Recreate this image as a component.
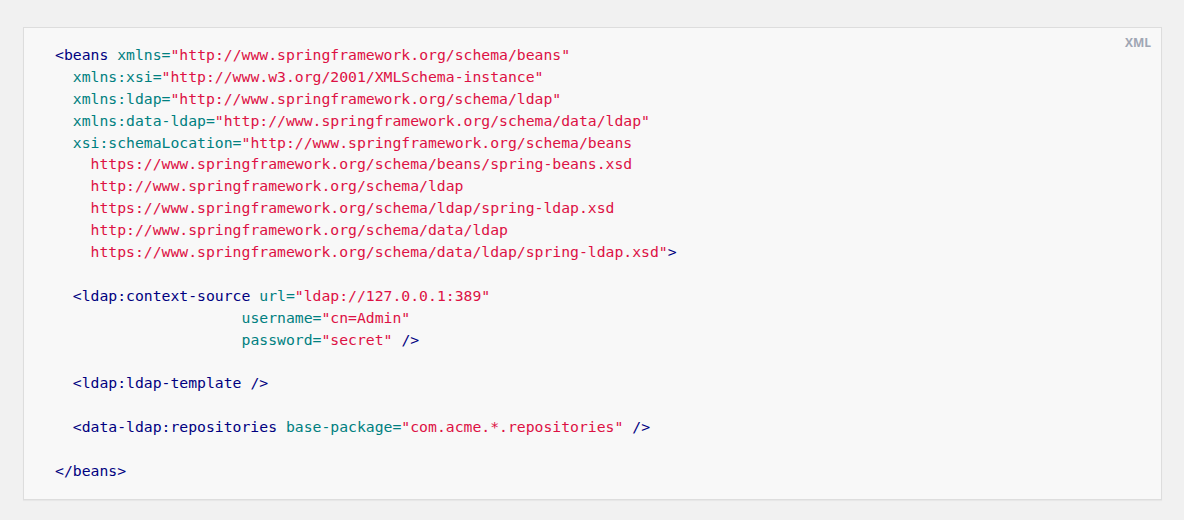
type Tok = [string, string];

const tagC = "text-[#000080]";
const attrC = "text-[#008080]";
const strC = "text-[#dd1144]";

const t = (s: string): Tok => ["tag", s];
const a = (s: string): Tok => ["attr", s];
const s = (v: string): Tok => ["str", v];
const p = (v: string): Tok => ["plain", v];

const lines: Tok[][] = [
    [t("<beans"), p(" "), a("xmlns="), s('"http://www.springframework.org/schema/beans"')],
    [p("  "), a("xmlns:xsi="), s('"http://www.w3.org/2001/XMLSchema-instance"')],
    [p("  "), a("xmlns:ldap="), s('"http://www.springframework.org/schema/ldap"')],
    [p("  "), a("xmlns:data-ldap="), s('"http://www.springframework.org/schema/data/ldap"')],
    [p("  "), a("xsi:schemaLocation="), s('"http://www.springframework.org/schema/beans')],
    [p("    "), s("https://www.springframework.org/schema/beans/spring-beans.xsd")],
    [p("    "), s("http://www.springframework.org/schema/ldap")],
    [p("    "), s("https://www.springframework.org/schema/ldap/spring-ldap.xsd")],
    [p("    "), s("http://www.springframework.org/schema/data/ldap")],
    [p("    "), s('https://www.springframework.org/schema/data/ldap/spring-ldap.xsd"'), t(">")],
    [],
    [p("  "), t("<ldap:context-source"), p(" "), a("url="), s('"ldap://127.0.0.1:389"')],
    [p("                     "), a("username="), s('"cn=Admin"')],
    [p("                     "), a("password="), s('"secret"'), p(" "), t("/>")],
    [],
    [p("  "), t("<ldap:ldap-template"), p(" "), t("/>")],
    [],
    [p("  "), t("<data-ldap:repositories"), p(" "), a("base-package="), s('"com.acme.*.repositories"'), p(" "), t("/>")],
    [],
    [t("</beans>")],
];

function colorFor(kind: string) {
    if (kind === "tag") return tagC;
    if (kind === "attr") return attrC;
    if (kind === "str") return strC;
    return "";
}

export default function App() {
    return (
        <div className="w-[1184px] h-[520px] bg-[#f1f1f1] pt-[27px] pl-[23px] pr-[22px] pb-[20px]">
            <div className="relative h-[473px] bg-[#f8f8f8] border border-[#dddddd] shadow-[0_1px_1px_rgba(0,0,0,0.04)]">
                <span className="absolute top-[6px] right-[10px] text-[12px] font-bold text-[#a0a6b4] font-['Open_Sans',sans-serif]">
                    XML
                </span>
                <pre className="pt-[16px] pl-[31px] font-['DejaVu_Sans_Mono',monospace] text-[14.76px] leading-[21.9px] text-[#333] whitespace-pre">
                    {lines.map((line, i) => (
                        <div key={i} className="h-[21.9px]">
                            {line.map(([kind, text], j) => (
                                <span key={j} className={colorFor(kind)}>
                                    {text}
                                </span>
                            ))}
                        </div>
                    ))}
                </pre>
            </div>
        </div>
    );
}
